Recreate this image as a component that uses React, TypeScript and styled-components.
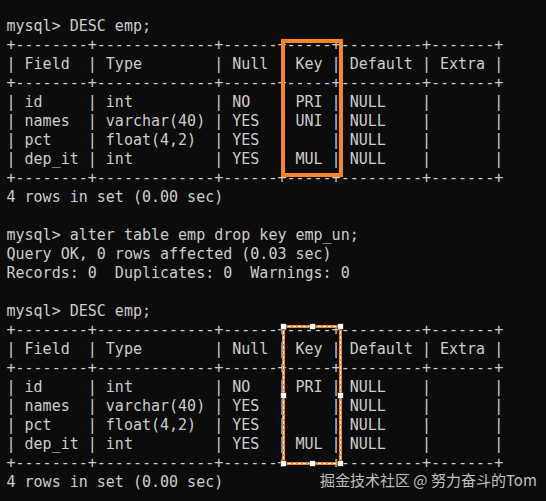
import React from "react";
import styled, { createGlobalStyle } from "styled-components";

const Global = createGlobalStyle`
  html, body { margin: 0; padding: 0; background: #0c0c0c; }
  #root { width: 546px; height: 501px; overflow: hidden; }
`;

const Screen = styled.div`
  position: relative;
  width: 546px;
  height: 501px;
  box-sizing: border-box;
  background: #0c0c0c;
  padding: 17px 0 0 6.5px;
  overflow: hidden;
`;

const Terminal = styled.pre`
  margin: 0;
  font-family: "DejaVu Sans Mono", "Liberation Mono", monospace;
  font-size: 15px;
  line-height: 19px;
  color: #cccccc;
  white-space: pre;
`;

const Line = styled.div`
  height: 19px;
`;

const Highlight = styled.div<{ $x: number; $y: number; $w: number; $h: number }>`
  position: absolute;
  left: ${(p) => p.$x}px;
  top: ${(p) => p.$y}px;
  width: ${(p) => p.$w}px;
  height: ${(p) => p.$h}px;
  box-sizing: border-box;
  border: 4px solid #f5862b;
`;

const Selection = styled.div<{ $x: number; $y: number; $w: number; $h: number }>`
  position: absolute;
  left: ${(p) => p.$x}px;
  top: ${(p) => p.$y}px;
  width: ${(p) => p.$w}px;
  height: ${(p) => p.$h}px;
  box-sizing: border-box;
  border: 3px solid #f5862b;
  &::after {
    content: "";
    position: absolute;
    inset: -2px;
    border: 1px dashed #ffffff;
  }
`;

const Handle = styled.span<{ $left: string; $top: string }>`
  position: absolute;
  left: ${(p) => p.$left};
  top: ${(p) => p.$top};
  width: 5px;
  height: 5px;
  margin: -2.5px 0 0 -2.5px;
  background: #ffffff;
  box-shadow: 0 0 0 0.5px #555;
  z-index: 2;
`;

const Watermark = styled.div`
  position: absolute;
  left: 320px;
  top: 473px;
  font-family: "Noto Sans CJK SC", "Noto Sans", sans-serif;
  font-size: 15px;
  line-height: 14px;
  color: rgba(225, 225, 225, 0.85);
  white-space: nowrap;
`;

type Row = [string, string, string, string, string, string];

const headers: Row = ["Field", "Type", "Null", "Key", "Default", "Extra"];

function formatTable(rows: Row[]): string[] {
  const all = [headers, ...rows];
  const widths = headers.map((_, i) => Math.max(...all.map((r) => r[i].length)));
  const border = "+" + widths.map((w) => "-".repeat(w + 2)).join("+") + "+";
  const fmt = (r: Row) => "| " + r.map((c, i) => c.padEnd(widths[i])).join(" | ") + " |";
  return [border, fmt(headers), border, ...rows.map(fmt), border];
}

const before: Row[] = [
  ["id", "int", "NO", "PRI", "NULL", ""],
  ["names", "varchar(40)", "YES", "UNI", "NULL", ""],
  ["pct", "float(4,2)", "YES", "", "NULL", ""],
  ["dep_it", "int", "YES", "MUL", "NULL", ""],
];

const after: Row[] = [
  ["id", "int", "NO", "PRI", "NULL", ""],
  ["names", "varchar(40)", "YES", "", "NULL", ""],
  ["pct", "float(4,2)", "YES", "", "NULL", ""],
  ["dep_it", "int", "YES", "MUL", "NULL", ""],
];

const lines: string[] = [
  "mysql> DESC emp;",
  ...formatTable(before),
  "4 rows in set (0.00 sec)",
  "",
  "mysql> alter table emp drop key emp_un;",
  "Query OK, 0 rows affected (0.03 sec)",
  "Records: 0  Duplicates: 0  Warnings: 0",
  "",
  "mysql> DESC emp;",
  ...formatTable(after),
  "4 rows in set (0.00 sec)",
];

const handles: Array<[string, string]> = [
  ["-1.5px", "-1.5px"],
  ["50%", "-1.5px"],
  ["calc(100% + 1.5px)", "-1.5px"],
  ["-1.5px", "50%"],
  ["calc(100% + 1.5px)", "50%"],
  ["-1.5px", "calc(100% + 1.5px)"],
  ["50%", "calc(100% + 1.5px)"],
  ["calc(100% + 1.5px)", "calc(100% + 1.5px)"],
];

export default function App() {
  return (
    <>
      <Global />
      <Screen>
        <Terminal>
          {lines.map((l, i) => (
            <Line key={i}>{l}</Line>
          ))}
        </Terminal>
        <Highlight $x={281} $y={39} $w={62} $h={138} />
        <Selection $x={282} $y={325} $w={60} $h={140}>
          {handles.map(([x, y], i) => (
            <Handle key={i} $left={x} $top={y} />
          ))}
        </Selection>
        <Watermark>掘金技术社区 @ 努力奋斗的Tom</Watermark>
      </Screen>
    </>
  );
}
